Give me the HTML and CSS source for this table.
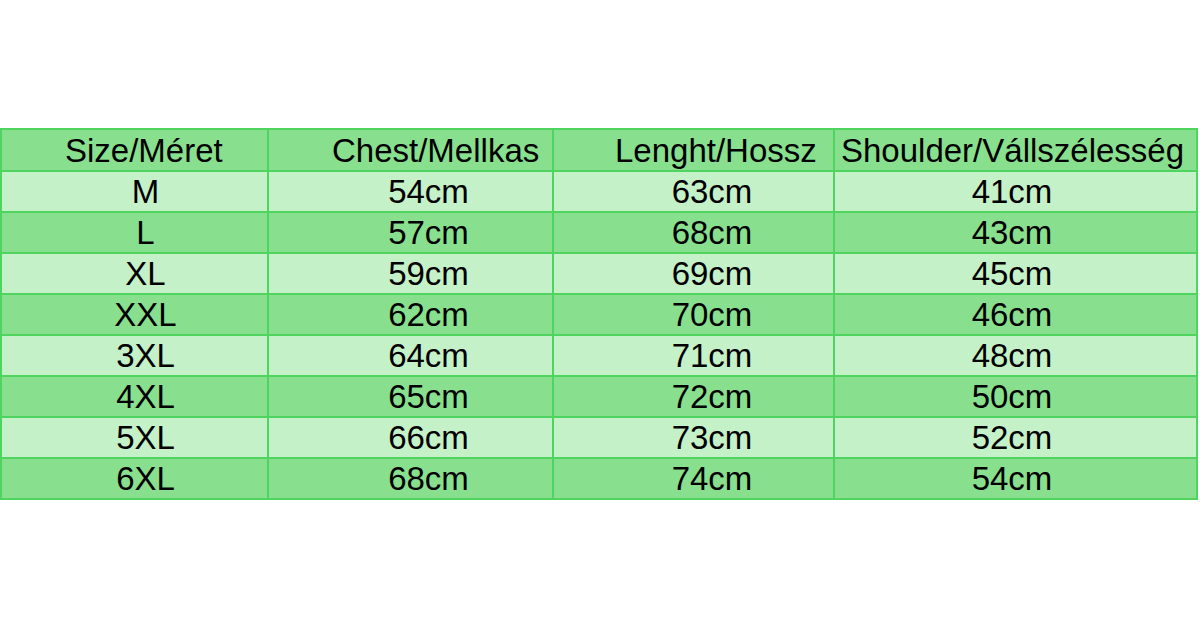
FILE: index.html
```html
<!DOCTYPE html>
<html lang="hu">
<head>
<meta charset="utf-8">
<title>Size chart</title>
<link rel="stylesheet" href="styles.css">
</head>
<body>
<div class="chart">
  <div class="cell head c1">Size/Méret</div>
  <div class="cell head c2">Chest/Mellkas</div>
  <div class="cell head c3">Lenght/Hossz</div>
  <div class="cell head c4">Shoulder/Vállszélesség</div>

  <div class="cell light b1">M</div><div class="cell light b2">54cm</div><div class="cell light b3">63cm</div><div class="cell light b4">41cm</div>
  <div class="cell dark b1">L</div><div class="cell dark b2">57cm</div><div class="cell dark b3">68cm</div><div class="cell dark b4">43cm</div>
  <div class="cell light b1">XL</div><div class="cell light b2">59cm</div><div class="cell light b3">69cm</div><div class="cell light b4">45cm</div>
  <div class="cell dark b1">XXL</div><div class="cell dark b2">62cm</div><div class="cell dark b3">70cm</div><div class="cell dark b4">46cm</div>
  <div class="cell light b1">3XL</div><div class="cell light b2">64cm</div><div class="cell light b3">71cm</div><div class="cell light b4">48cm</div>
  <div class="cell dark b1">4XL</div><div class="cell dark b2">65cm</div><div class="cell dark b3">72cm</div><div class="cell dark b4">50cm</div>
  <div class="cell light b1">5XL</div><div class="cell light b2">66cm</div><div class="cell light b3">73cm</div><div class="cell light b4">52cm</div>
  <div class="cell dark b1">6XL</div><div class="cell dark b2">68cm</div><div class="cell dark b3">74cm</div><div class="cell dark b4">54cm</div>
</div>
</body>
</html>
```
FILE: styles.css
```css
html, body {
  margin: 0;
  padding: 0;
  background: #ffffff;
}
body {
  width: 1200px;
  height: 630px;
  overflow: hidden;
  font-family: "Liberation Sans", Arial, sans-serif;
  color: #000000;
}
.chart {
  display: grid;
  grid-template-columns: 265px 283px 279px 361px;
  grid-template-rows: 40px repeat(8, 39px);
  gap: 2px;
  padding: 2px;
  width: max-content;
  margin-top: 128px;
  background: #50d460;
}
.cell {
  display: flex;
  align-items: center;
  font-size: 33px;
  line-height: 1;
  white-space: nowrap;
  box-sizing: border-box;
}
.head { background: #88e08e; justify-content: flex-start; }
.dark { background: #88e08e; justify-content: center; }
.light { background: #c5f1c9; justify-content: center; }
.head.c1 { padding-left: 63px; }
.head.c2 { padding-left: 63px; }
.head.c3 { padding-left: 61px; }
.head.c4 { padding-left: 6px; }
.b1 { padding-left: 22px; }
.b2 { padding-left: 36px; }
.b3 { padding-left: 37px; }
.b4 { padding-right: 7px; }
```
